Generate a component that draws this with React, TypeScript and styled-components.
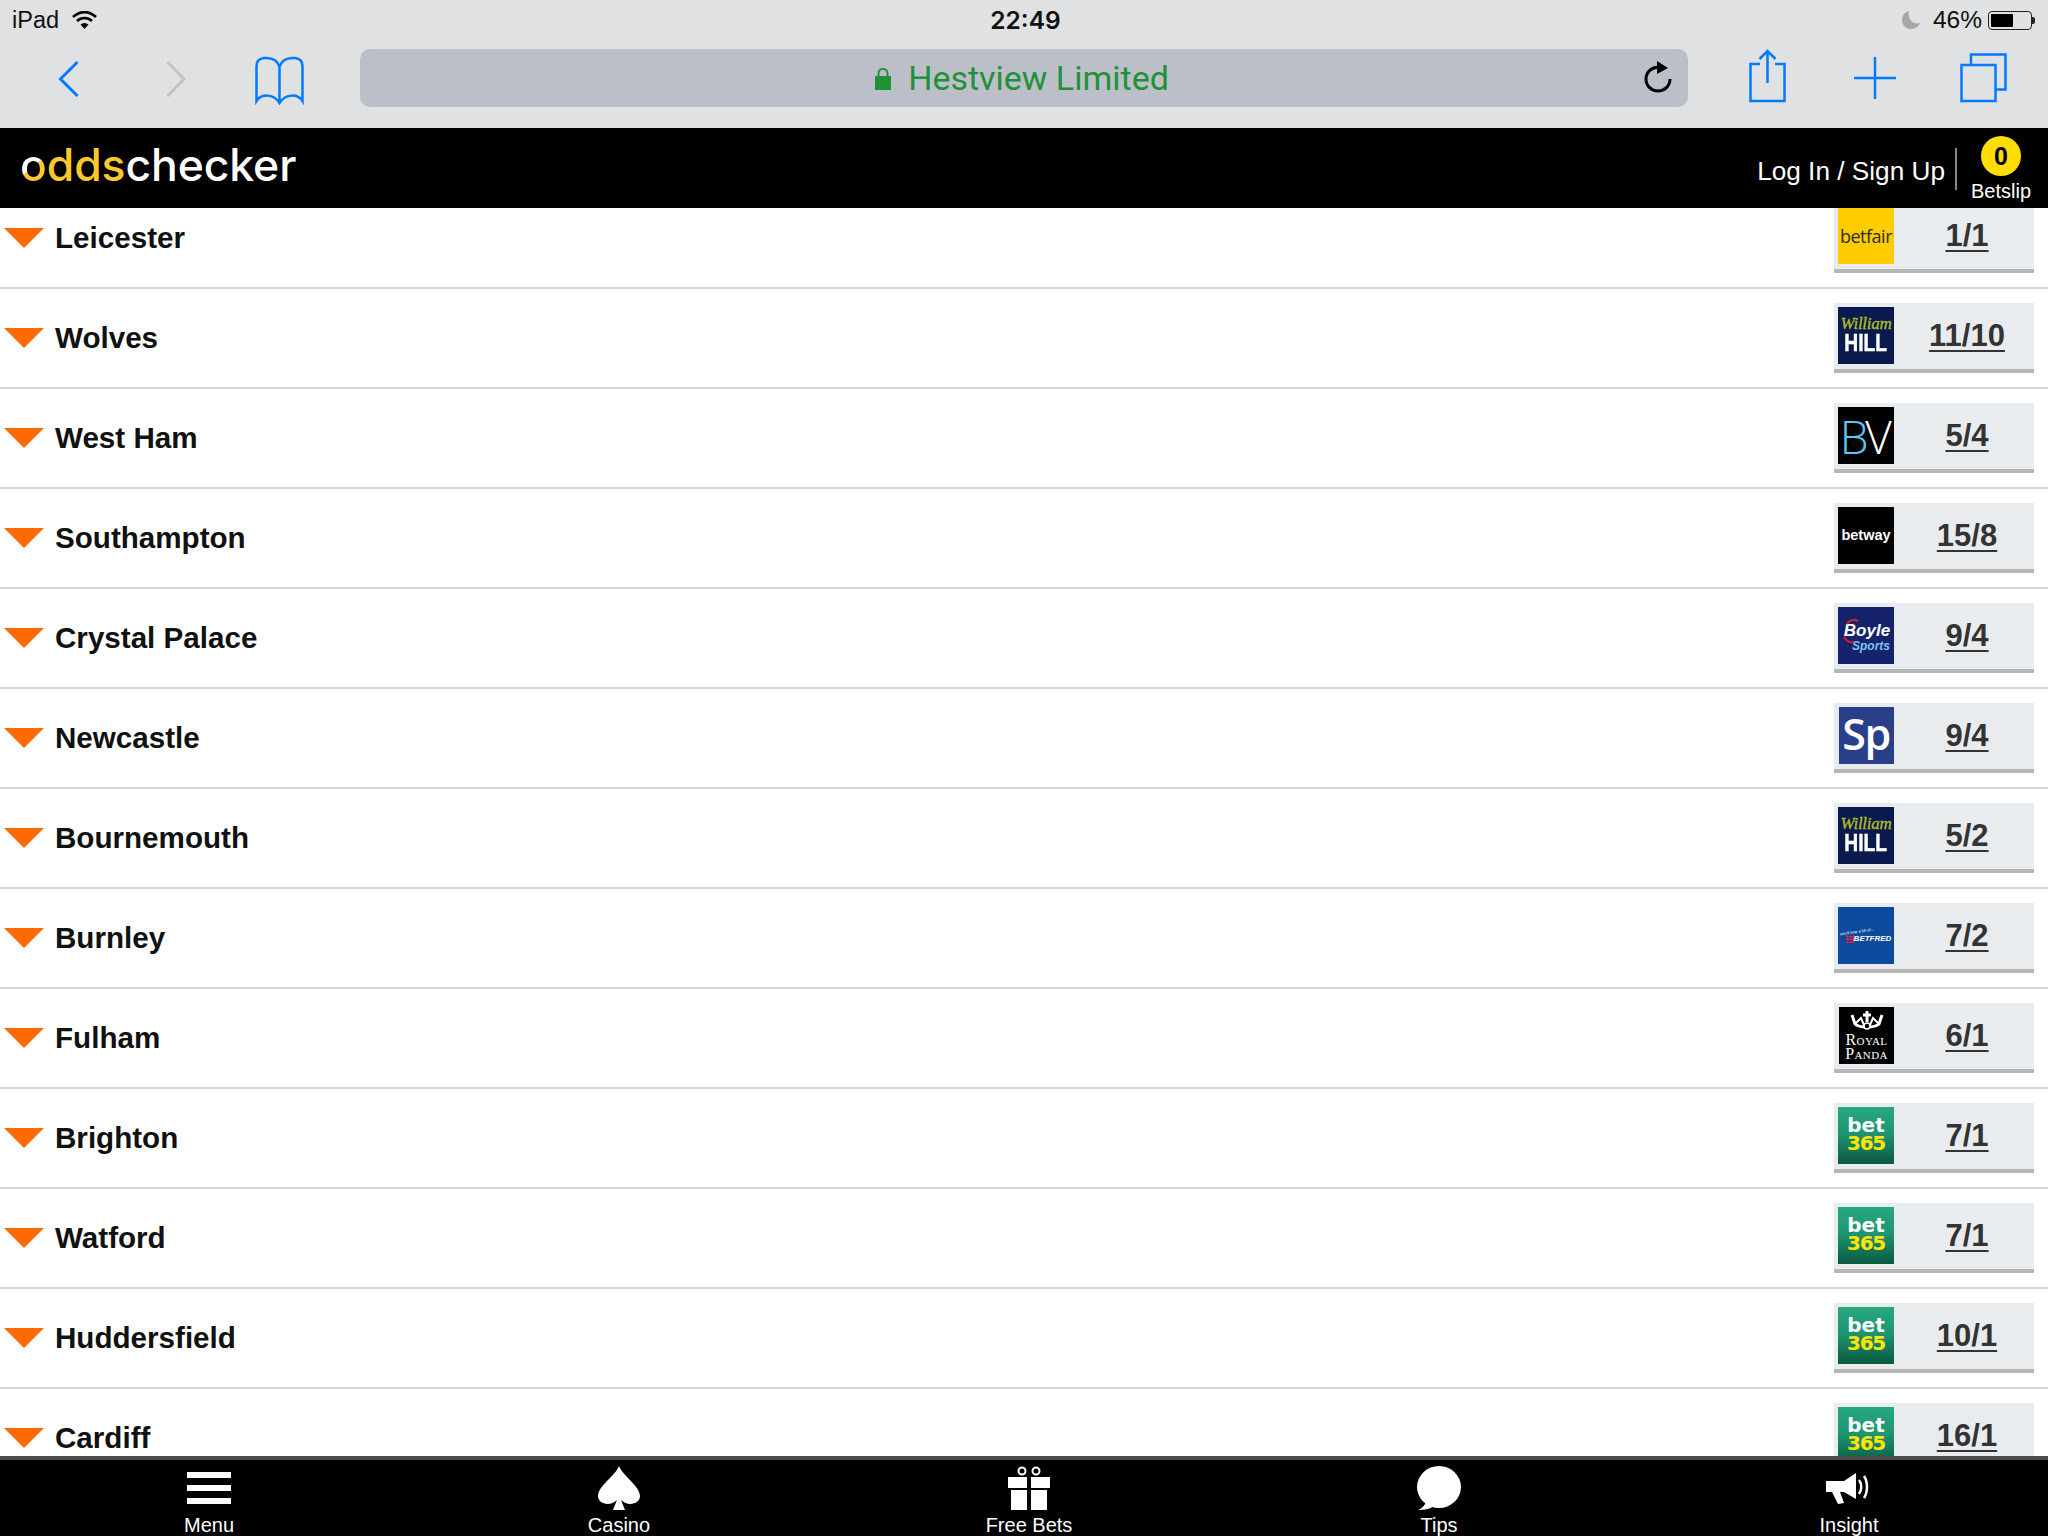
import React from "react";
import styled, { createGlobalStyle } from "styled-components";

const GlobalStyle = createGlobalStyle`
    html, body {
        margin: 0;
        padding: 0;
        background: #fff;
        font-family: "Liberation Sans", Arial, sans-serif;
    }
`;

const Page = styled.div`
    width: 2048px;
    height: 1536px;
    display: flex;
    flex-direction: column;
    overflow: hidden;
`;

/* ---- ios chrome ---- */

const StatusBar = styled.div`
    height: 40px;
    flex: none;
    display: grid;
    grid-template-columns: 1fr auto 1fr;
    align-items: center;
    padding: 0 12px;
    box-sizing: border-box;
    background: #e0e1e3;
    color: #111;
    font-size: 23.5px;
`;

const StatusLeft = styled.div`
    display: flex;
    align-items: center;
    gap: 13px;
`;

const StatusRight = styled.div`
    display: flex;
    align-items: center;
    justify-content: flex-end;
    gap: 6px;
    font-size: 24.5px;
    padding-right: 4px;
`;

const Clock = styled.div`
    font-family: Inter, sans-serif;
    font-size: 24.5px;
    font-weight: 600;
    margin-left: 3px;
`;

const Moon = styled.svg`
    width: 18px;
    height: 18px;
    margin-right: 7px;
`;

const Battery = styled.div`
    width: 44px;
    height: 19px;
    box-sizing: border-box;
    border: 1px solid #222;
    border-radius: 4px;
    padding: 2px;
    position: relative;
    &::after {
        content: "";
        position: absolute;
        right: -4px;
        top: 5px;
        width: 3px;
        height: 7px;
        background: #222;
        border-radius: 0 2px 2px 0;
    }
`;

const BatteryLevel = styled.div`
    height: 100%;
    background: #000;
    border-radius: 1px;
`;

const Toolbar = styled.div`
    height: 88px;
    flex: none;
    display: flex;
    align-items: center;
    box-sizing: border-box;
    padding: 0 0 12px 59px;
    background: #e0e1e3;
`;

const ToolIcon = styled.svg<{ $left?: number; $weight?: number }>`
    height: 58px;
    flex: none;
    overflow: visible;
    margin-left: ${(p) => p.$left ?? 0}px;
    fill: none;
    stroke: ${(p) => p.color ?? "#007aff"};
    stroke-width: ${(p) => p.$weight ?? 2.5};
`;

const UrlBar = styled.div`
    width: 1328px;
    height: 58px;
    margin-left: 56px;
    flex: none;
    display: flex;
    align-items: center;
    justify-content: center;
    gap: 17px;
    position: relative;
    background: #bcbfc8;
    border-radius: 10px;
    padding-right: 4px;
    box-sizing: border-box;
`;

const SiteName = styled.span`
    font-family: Roboto, sans-serif;
    font-size: 34px;
    color: #1f9238;
`;

const Reload = styled.svg`
    position: absolute;
    right: 16px;
    top: 12px;
    width: 28px;
    height: 32px;
`;

/* ---- site header ---- */

const SiteHeader = styled.header`
    height: 80px;
    flex: none;
    display: flex;
    align-items: center;
    justify-content: space-between;
    background: #000;
    padding: 0 17px 0 20px;
    box-sizing: border-box;
`;

const Brand = styled.div`
    font-family: Inter, sans-serif;
    font-size: 44.5px;
    font-weight: 500;
    line-height: 1;
    letter-spacing: -0.1px;
    color: #fff;
    margin-top: -6px;
`;

const BrandOdds = styled.span`
    color: #fdc82b;
`;

const BrandO = styled.span`
    background: linear-gradient(140deg, #fff 52%, #fdc82b 52%);
    -webkit-background-clip: text;
    background-clip: text;
    color: transparent;
`;

const HeaderRight = styled.div`
    display: flex;
    align-items: center;
`;

const LogIn = styled.span`
    font-size: 26.2px;
    color: #fff;
    margin-top: 6px;
`;

const HeaderDivider = styled.div`
    width: 2px;
    height: 42px;
    background: #888;
    margin: 2px 14px 0 10px;
`;

const Betslip = styled.div`
    display: flex;
    flex-direction: column;
    align-items: center;
    color: #fff;
    font-size: 20px;
    line-height: 24px;
    margin-top: 3px;
`;

const BetCount = styled.div`
    width: 40px;
    height: 40px;
    border-radius: 50%;
    background: #ffdd00;
    color: #000;
    font-size: 25px;
    font-weight: bold;
    display: flex;
    align-items: center;
    justify-content: center;
    margin-bottom: 3px;
`;

/* ---- runners ---- */

const Content = styled.main`
    flex: 1;
    min-height: 0;
    overflow: hidden;
`;

const List = styled.div`
    margin-top: -19px;
`;

const Row = styled.div`
    height: 100px;
    display: flex;
    align-items: center;
    box-sizing: border-box;
    border-bottom: 2px solid #d4d4d4;
    padding: 0 14px 0 4px;
`;

const Arrow = styled.span`
    width: 0;
    height: 0;
    border-left: 20px solid transparent;
    border-right: 20px solid transparent;
    border-top: 20px solid #ff6a00;
    margin-right: 11px;
`;

const TeamName = styled.span`
    font-size: 29.6px;
    font-weight: bold;
    color: #111;
    flex: 1;
`;

const OddsBox = styled.div`
    width: 200px;
    height: 70px;
    box-sizing: border-box;
    padding: 4px 0 0 4px;
    display: flex;
    background: #e9ecef;
    border-bottom: 4px solid #b5b5b5;
`;

const OddsValue = styled.a`
    flex: 1;
    text-align: center;
    padding-left: 6px;
    font-size: 31px;
    font-weight: bold;
    color: #333;
    line-height: 58px;
    text-decoration: underline;
    text-decoration-thickness: 2px;
    text-underline-offset: 4px;
`;

const Logo = styled.div<{ $bg: string; $fg?: string }>`
    width: 56px;
    height: 57px;
    flex: none;
    background: ${(p) => p.$bg};
    color: ${(p) => p.$fg ?? "#fff"};
    display: flex;
    flex-direction: column;
    align-items: center;
    justify-content: center;
    position: relative;
    line-height: 1;
    white-space: nowrap;
`;

const InsetLogo = styled(Logo)`
    width: 55px;
    margin-left: 1px;
`;

const WilliamScript = styled.span`
    font-family: "Liberation Serif", serif;
    font-style: italic;
    font-size: 17px;
    letter-spacing: -0.3px;
    color: #b3bf1f;
    margin-top: -3px;
    -webkit-text-stroke: 0.3px #b3bf1f;
`;

const HillText = styled.span`
    font-size: 24px;
    line-height: 22px;
    font-weight: bold;
    transform: scaleX(0.8);
    -webkit-text-stroke: 0.5px #fff;
`;

const BvText = styled.span`
    font-family: "Open Sans", sans-serif;
    font-weight: 300;
    font-size: 46px;
    line-height: 48px;
    letter-spacing: -3.5px;
    margin-left: -4px;
`;

const BvBlue = styled.span`
    color: #5cc8f5;
`;

const BetwayText = styled.span`
    font-weight: 700;
    font-size: 14.5px;
`;

const BetfairText = styled.span`
    font-family: "Open Sans", sans-serif;
    font-size: 18px;
    letter-spacing: -0.5px;
`;

const BoyleText = styled.span`
    font-size: 17px;
    font-weight: bold;
    font-style: italic;
    margin: 3px 0 0 2px;
`;

const BoyleSports = styled.span`
    font-size: 12px;
    font-weight: bold;
    font-style: italic;
    color: #7cc4ea;
    margin: 1px 0 0 10px;
`;

const BoyleArc = styled.svg`
    position: absolute;
    left: 5px;
    top: 11px;
    width: 16px;
    height: 26px;
`;

const SpText = styled.span`
    font-family: "Open Sans", sans-serif;
    font-size: 43px;
    line-height: 48px;
    font-weight: 600;
    letter-spacing: -1.5px;
    margin: -4px 0 0 -1px;
`;

const FredTag = styled.span`
    position: absolute;
    left: 2px;
    top: 23px;
    font-size: 4px;
    transform: rotate(-8deg);
`;

const FredLine = styled.div`
    display: flex;
    align-items: center;
    margin: 6px 0 0 5px;
`;

const FredDots = styled.span`
    width: 8px;
    height: 8px;
    background: radial-gradient(#e02040 1px, transparent 1.2px) 0 0 / 3px 3px;
`;

const FredName = styled.span`
    font-size: 8px;
    font-weight: bold;
    font-style: italic;
`;

const PandaText = styled.span`
    font-family: "Liberation Serif", serif;
    font-size: 16px;
    line-height: 14px;
    letter-spacing: 0.4px;
    font-variant: small-caps;
`;

const Crown = styled.svg`
    width: 34px;
    height: 22px;
    margin: -1px 0 1px;
`;

const Bet365Top = styled.span`
    font-family: "DejaVu Sans", sans-serif;
    font-size: 20px;
    font-weight: bold;
    line-height: 18px;
    margin-top: -2px;
`;

const Bet365Num = styled.span`
    font-family: "DejaVu Sans", sans-serif;
    font-size: 20px;
    font-weight: bold;
    line-height: 19px;
    letter-spacing: -1.2px;
    color: #ffe600;
`;

/* ---- bottom nav ---- */

const BottomNav = styled.nav`
    height: 80px;
    flex: none;
    display: grid;
    grid-template-columns: repeat(5, 410px);
    padding-left: 4px;
    box-sizing: border-box;
    overflow: hidden;
    background: #000;
    border-top: 4px solid #4d4d4d;
`;

const NavItem = styled.div`
    display: flex;
    flex-direction: column;
    align-items: center;
    color: #fff;
    font-size: 20px;
    line-height: 20px;
    padding-top: 6px;
`;

const NavIconSlot = styled.div`
    height: 44px;
    display: flex;
    align-items: center;
    justify-content: center;
    margin-bottom: 5px;
`;

const NavIcon = styled.svg`
    fill: #fff;
`;

const logos: Record<string, React.ReactNode> = {
    betfair: (
        <Logo $bg="#ffcc00" $fg="#2b2b2b">
            <BetfairText>betfair</BetfairText>
        </Logo>
    ),
    hill: (
        <Logo $bg="#0a1a4e">
            <WilliamScript>William</WilliamScript>
            <HillText>HILL</HillText>
        </Logo>
    ),
    bv: (
        <Logo $bg="#000">
            <BvText>
                <BvBlue>B</BvBlue>V
            </BvText>
        </Logo>
    ),
    betway: (
        <Logo $bg="#000">
            <BetwayText>betway</BetwayText>
        </Logo>
    ),
    boyle: (
        <Logo $bg="#14236b">
            <BoyleArc viewBox="0 0 16 26" fill="none" stroke="#d8201c" strokeWidth="2">
                <path d="M4 6 C6 2 11 1 15 3" />
                <path d="M1 19 C3 23 7 25 11 24" />
            </BoyleArc>
            <BoyleText>Boyle</BoyleText>
            <BoyleSports>Sports</BoyleSports>
        </Logo>
    ),
    sp: (
        <InsetLogo $bg="#2a3f8a">
            <SpText>Sp</SpText>
        </InsetLogo>
    ),
    betfred: (
        <Logo $bg="#0c4a9e">
            <FredTag>you'll love a bit of...</FredTag>
            <FredLine>
                <FredDots />
                <FredName>BETFRED</FredName>
            </FredLine>
        </Logo>
    ),
    panda: (
        <InsetLogo $bg="#000">
            <Crown viewBox="0 0 34 22" fill="none" stroke="#fff" strokeWidth="3">
                <path d="M2 5 L5 14 C9 18 25 18 29 14 L32 5" />
                <path d="M5 14 L11 8 L14 15 M29 14 L23 8 L20 15" strokeWidth="2" />
                <path d="M17 1 V12 M13 5 H21" />
                <circle cx="17" cy="16" r="3" fill="#000" strokeWidth="1.6" />
            </Crown>
            <PandaText>Royal</PandaText>
            <PandaText>Panda</PandaText>
        </InsetLogo>
    ),
    bet365: (
        <Logo $bg="linear-gradient(#27a880 0%, #1f9672 45%, #0a5a40 100%)">
            <Bet365Top>bet</Bet365Top>
            <Bet365Num>365</Bet365Num>
        </Logo>
    ),
};

const runners = [
    { name: "Leicester", odds: "1/1", logo: "betfair" },
    { name: "Wolves", odds: "11/10", logo: "hill" },
    { name: "West Ham", odds: "5/4", logo: "bv" },
    { name: "Southampton", odds: "15/8", logo: "betway" },
    { name: "Crystal Palace", odds: "9/4", logo: "boyle" },
    { name: "Newcastle", odds: "9/4", logo: "sp" },
    { name: "Bournemouth", odds: "5/2", logo: "hill" },
    { name: "Burnley", odds: "7/2", logo: "betfred" },
    { name: "Fulham", odds: "6/1", logo: "panda" },
    { name: "Brighton", odds: "7/1", logo: "bet365" },
    { name: "Watford", odds: "7/1", logo: "bet365" },
    { name: "Huddersfield", odds: "10/1", logo: "bet365" },
    { name: "Cardiff", odds: "16/1", logo: "bet365" },
];

export default function App() {
    return (
        <Page>
            <GlobalStyle />
            <StatusBar>
                <StatusLeft>
                    <span>iPad</span>
                    <svg width="25" height="18" viewBox="0 0 25 18" fill="none" stroke="#000" strokeWidth="2.6">
                        <path d="M1 6 C8 -0.5 17 -0.5 24 6" />
                        <path d="M5 10 C9.500 6 15.500 6 20 10" />
                        <path d="M12.500 18 L8.500 13.500 C11 11.500 14 11.500 16.500 13.500 Z" fill="#000" stroke="none" />
                    </svg>
                </StatusLeft>
                <Clock>22:49</Clock>
                <StatusRight>
                    <Moon viewBox="0 0 18 18">
                        <path d="M7 0 C3 1 0 4.500 0 9 C0 14 4 18 9 18 C13 18 16.500 15.500 18 12 C11 14 5 8 7 0 Z" fill="#a6a6a6" />
                    </Moon>
                    <span>46%</span>
                    <Battery>
                        <BatteryLevel style={{ width: "58%" }} />
                    </Battery>
                </StatusRight>
            </StatusBar>

            <Toolbar>
                <ToolIcon $weight={3} width="20" viewBox="59 49 20 58">
                    <path d="M77.500 62 L60.500 79 L77.500 96" />
                </ToolIcon>
                <ToolIcon $left={87} $weight={3} width="19" viewBox="166 49 19 58" color="#c4c4c6">
                    <path d="M167.500 62 L184 79 L167.500 96" />
                </ToolIcon>
                <ToolIcon $left={70} width="49" viewBox="255 49 49 58">
                    <path d="M279.500 67 C277 58 270 57.500 264 58 C259 58.500 256.500 61 256.500 66 V101 C261 94 273 93 279.500 103 C286 93 298 94 302.500 101 V66 C302.500 61 300 58.500 295 58 C289 57.500 282 58 279.500 67 V103" />
                </ToolIcon>
                <UrlBar>
                    <svg width="16" height="23" viewBox="0 0 16 23">
                        <path d="M3.500 10 V6 C3.500 0.500 12.500 0.500 12.500 6 V10" fill="none" stroke="#1f9238" strokeWidth="2" />
                        <rect x="0" y="9" width="16" height="14" fill="#1f9238" />
                    </svg>
                    <SiteName>Hestview Limited</SiteName>
                    <Reload viewBox="0 0 28 32" fill="none" stroke="#000" strokeWidth="3">
                        <path d="M16 6.500 C8 5.500 2 11 2 18 C2 25 7.500 30 14 30 C20.500 30 26 25 26 18" />
                        <path d="M13 0 L24 7 L13 13 Z" fill="#000" stroke="none" />
                    </Reload>
                </UrlBar>
                <ToolIcon $left={61} width="37" viewBox="1749 49 37 58">
                    <path d="M1760 64 H1750.500 V101 H1784.500 V64 H1775" />
                    <path d="M1767.500 83 V52 M1759.500 59 L1767.500 51 L1775.500 59" />
                </ToolIcon>
                <ToolIcon $left={68} width="42" viewBox="1854 49 42 58">
                    <path d="M1875 57 V99 M1854 78 H1896" />
                </ToolIcon>
                <ToolIcon $left={64} width="47" viewBox="1960 49 47 58">
                    <rect x="1961.500" y="65" width="34" height="36" />
                    <path d="M1971 64 V54.500 H2005.500 V89.500 H1996" />
                </ToolIcon>
            </Toolbar>

            <SiteHeader>
                <Brand>
                    <BrandO>o</BrandO>
                    <BrandOdds>dds</BrandOdds>checker
                </Brand>
                <HeaderRight>
                    <LogIn>Log In / Sign Up</LogIn>
                    <HeaderDivider />
                    <Betslip>
                        <BetCount>0</BetCount>
                        Betslip
                    </Betslip>
                </HeaderRight>
            </SiteHeader>

            <Content>
                <List>
                    {runners.map((r) => (
                        <Row key={r.name}>
                            <Arrow />
                            <TeamName>{r.name}</TeamName>
                            <OddsBox>
                                {logos[r.logo]}
                                <OddsValue>{r.odds}</OddsValue>
                            </OddsBox>
                        </Row>
                    ))}
                </List>
            </Content>

            <BottomNav>
                <NavItem>
                    <NavIconSlot>
                        <NavIcon width="44" height="32" viewBox="0 0 44 32">
                            <rect y="0" width="44" height="6" />
                            <rect y="13" width="44" height="6" />
                            <rect y="26" width="44" height="6" />
                        </NavIcon>
                    </NavIconSlot>
                    Menu
                </NavItem>
                <NavItem>
                    <NavIconSlot>
                        <NavIcon width="42" height="44" viewBox="0 0 42 44">
                            <path d="M21 0 C25 10 42 20 42 30 C42 38 30 41 23 34 L27 44 H15 L19 34 C12 41 0 38 0 30 C0 20 17 10 21 0 Z" />
                        </NavIcon>
                    </NavIconSlot>
                    Casino
                </NavItem>
                <NavItem>
                    <NavIconSlot>
                        <NavIcon width="42" height="44" viewBox="0 0 42 44">
                            <circle cx="14" cy="5" r="3.500" fill="none" stroke="#fff" strokeWidth="2" />
                            <circle cx="28" cy="5" r="3.500" fill="none" stroke="#fff" strokeWidth="2" />
                            <rect x="0" y="11" width="19" height="11" />
                            <rect x="23" y="11" width="19" height="11" />
                            <rect x="3" y="24" width="16" height="20" />
                            <rect x="23" y="24" width="16" height="20" />
                        </NavIcon>
                    </NavIconSlot>
                    Free Bets
                </NavItem>
                <NavItem>
                    <NavIconSlot>
                        <NavIcon width="44" height="44" viewBox="0 0 44 44">
                            <ellipse cx="22" cy="21" rx="22" ry="21" />
                            <path d="M9 34 C9 38 6 42 1 44 C7 44 13 43 17 40 Z" />
                        </NavIcon>
                    </NavIconSlot>
                    Tips
                </NavItem>
                <NavItem>
                    <NavIconSlot>
                        <NavIcon width="46" height="32" viewBox="0 0 46 32">
                            <path d="M0 9 L18 9 L30 1 L30 27 L18 20 L14 20 L18 31 L12 32 L6 20 L0 20 Z" />
                            <path d="M33 8 C36 12 36 18 33 22 M38 4 C42 10 42 20 38 26" fill="none" stroke="#fff" strokeWidth="2.500" />
                        </NavIcon>
                    </NavIconSlot>
                    Insight
                </NavItem>
            </BottomNav>
        </Page>
    );
}
